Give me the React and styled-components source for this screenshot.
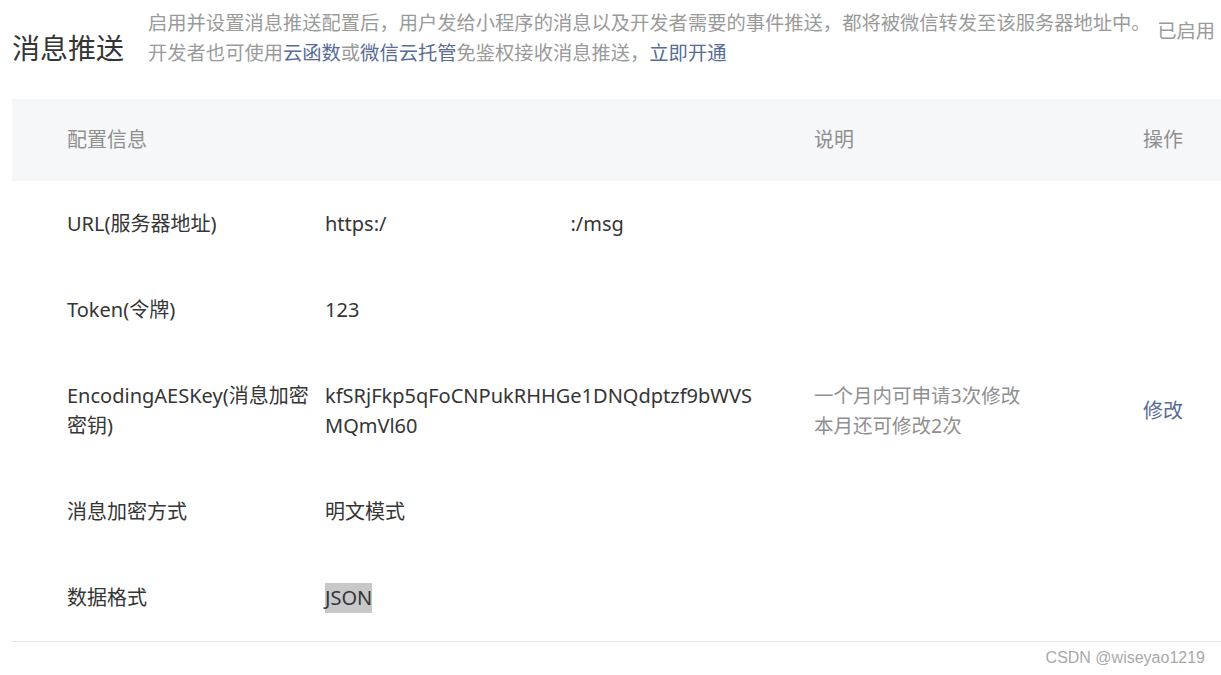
import React from "react";
import styled, { createGlobalStyle } from "styled-components";

const GlobalStyle = createGlobalStyle`
  html, body {
    margin: 0;
    padding: 0;
    background: #fff;
  }
  body {
    font-family: "Noto Sans", "Noto Sans CJK SC", sans-serif;
    color: #353535;
  }
`

const Page = styled.div`
  padding: 7px 0 0 12px;
  width: 1221px;
  box-sizing: border-box;
  overflow: hidden;
`

const Head = styled.div`
  display: flex;
  align-items: flex-end;
`

const Title = styled.h2`
  flex-shrink: 0;
  margin: 0 24px 0 0;
  font-size: 28px;
  font-weight: 400;
  line-height: 40px;
  white-space: nowrap;
  color: #353535;
  font-family: "Noto Sans CJK SC", sans-serif;
`

const Desc = styled.p`
  margin: 0;
  flex: 1;
  min-width: 0;
  font-size: 19.3px;
  line-height: 30px;
  color: #9a9a9a;
  font-family: "Noto Sans CJK SC", sans-serif;
  white-space: nowrap;
`

const Link = styled.a`
  color: #576b95;
  text-decoration: none;
`

const Status = styled.span`
  flex-shrink: 0;
  align-self: flex-start;
  margin-top: 8px;
  padding-right: 6px;
  font-size: 19.3px;
  line-height: 30px;
  white-space: nowrap;
  color: #9a9a9a;
  font-family: "Noto Sans CJK SC", sans-serif;
`

const Table = styled.div`
  margin-top: 32px;
  border-bottom: 1px solid #e6e6e6;
`

const Row = styled.div`
  display: grid;
  grid-template-columns: 313px 489px 329px 1fr;
  align-items: center;
  background: ${(p) => (p.$head ? "#f6f7f9" : "transparent")};
  padding: ${(p) => (p.$head ? "26px 0" : "28px 0")};
`

const Cell = styled.div`
  padding-left: ${(p) => (p.$first ? "55px" : "0")};
  font-size: ${(p) => (p.$muted ? "19.5px" : "20px")};
  line-height: 30px;
  white-space: nowrap;
  color: ${(p) => (p.$head || p.$muted ? "#8f8f8f" : "#353535")};
`

const Action = styled.a`
  color: #576b95;
  text-decoration: none;
`

const Mask = styled.span`
  display: inline-block;
  width: 184px;
`

const Selected = styled.span`
  display: inline-block;
  background: #c8c8c8;
  line-height: 30px;
`

const Watermark = styled.div`
  text-align: right;
  padding: 6px 16px 0 0;
  font-size: 16px;
  line-height: 20px;
  color: #a9a9a9;
  font-family: "Liberation Sans", sans-serif;
`

const rows = [
  { label: "URL(服务器地址)", value: <>https:/<Mask />:/msg</> },
  { label: "Token(令牌)", value: "123" },
  {
    label: <>EncodingAESKey(消息加密<br />密钥)</>,
    value: <>kfSRjFkp5qFoCNPukRHHGe1DNQdptzf9bWVS<br />MQmVl60</>,
    note: <>一个月内可申请3次修改<br />本月还可修改2次</>,
    action: "修改",
  },
  { label: "消息加密方式", value: "明文模式" },
  { label: "数据格式", value: <Selected>JSON</Selected> },
];

export default function App() {
  return (
    <Page>
      <GlobalStyle />
      <Head>
        <Title>消息推送</Title>
        <Desc>
          启用并设置消息推送配置后，用户发给小程序的消息以及开发者需要的事件推送，都将被微信转发至该服务器地址中。
          <br />
          开发者也可使用<Link>云函数</Link>或<Link>微信云托管</Link>免鉴权接收消息推送，<Link>立即开通</Link>
        </Desc>
        <Status>已启用</Status>
      </Head>

      <Table>
        <Row $head>
          <Cell $first $head>配置信息</Cell>
          <Cell $head></Cell>
          <Cell $head>说明</Cell>
          <Cell $head>操作</Cell>
        </Row>
        {rows.map((r, i) => (
          <Row key={i}>
            <Cell $first>{r.label}</Cell>
            <Cell>{r.value}</Cell>
            <Cell $muted>{r.note}</Cell>
            <Cell>{r.action && <Action>{r.action}</Action>}</Cell>
          </Row>
        ))}
      </Table>
      <Watermark>CSDN @wiseyao1219</Watermark>
    </Page>
  );
}
